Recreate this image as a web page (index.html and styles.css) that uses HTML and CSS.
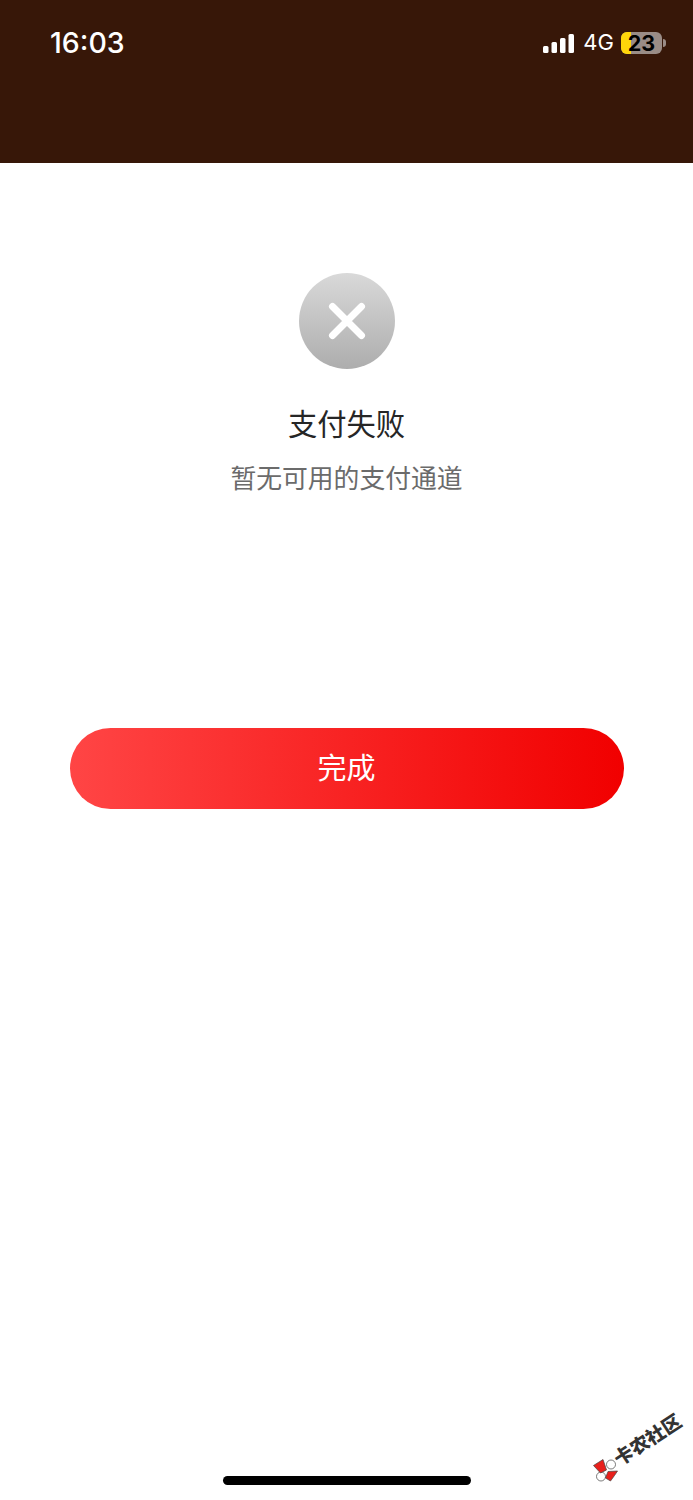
FILE: index.html
```html
<!DOCTYPE html>
<html lang="zh">
<head>
<meta charset="utf-8">
<title>支付失败</title>
<link rel="stylesheet" href="styles.css">
</head>
<body>
<div class="page">
  <header class="topbar">
    <span class="time">16:03</span>
    <div class="status">
      <svg class="signal" width="32" height="20" viewBox="0 0 32 20"><rect x="0" y="12" width="5.5" height="7" rx="1.5"/><rect x="8.5" y="8" width="5.5" height="11" rx="1.5"/><rect x="17" y="4" width="5.5" height="15" rx="1.5"/><rect x="25.5" y="0" width="5.5" height="19" rx="1.5"/></svg>
      <span class="net">4G</span>
      <div class="battery">
        <div class="battery-body"><div class="battery-fill"></div><span class="battery-num">23</span></div>
        <div class="battery-cap"></div>
      </div>
    </div>
  </header>
  <main class="content">
    <div class="fail-icon">
      <svg width="96" height="96" viewBox="0 0 96 96"><path d="M33.5 33.5L62.5 62.5M62.5 33.5L33.5 62.5" fill="none" stroke="#fff" stroke-width="7" stroke-linecap="round"/></svg>
    </div>
    <h1 class="title">支付失败</h1>
    <p class="subtitle">暂无可用的支付通道</p>
    <button class="done"><span class="done-label">完成</span></button>
  </main>
  <div class="home-bar"></div>
  <div class="watermark">
    <svg class="wm-logo" width="36" height="36" viewBox="0 0 36 36"><g stroke="#444" stroke-width=".7"><circle cx="23" cy="16.5" r="4.5" fill="#fff"/><circle cx="13" cy="28.5" r="4.5" fill="#fff"/><path d="M5.5 17.5L15 11.5L18.5 22L12.5 25Z" fill="#e8201c"/><path d="M20 23.5L29.5 23L26.5 27.5L22.5 33L17.5 30Z" fill="#e8201c"/></g></svg>
    <span class="wm-text">卡农社区</span>
  </div>
</div>
</body>
</html>
```

FILE: styles.css
```css
* { box-sizing: border-box; }
html, body { margin: 0; padding: 0; background: #fff; }
body { font-family: "Noto Sans CJK SC", "Liberation Sans", sans-serif; }
.page { position: relative; width: 693px; height: 1500px; overflow: hidden; background: #fff; }
.topbar {
  height: 163px; background: #371708; color: #fff;
  display: flex; justify-content: space-between; align-items: flex-start;
  padding: 24px 27px 0 50px;
}
.time { font-family: Inter, "Liberation Sans", sans-serif; font-size: 28.5px; font-weight: 500; line-height: 37px; }
.status { display: flex; align-items: center; height: 37px; }
.signal { fill: #fff; margin-top: 2px; }
.net { font-family: Inter, "Liberation Sans", sans-serif; font-size: 22px; line-height: 37px; margin-left: 8px; }
.battery { display: flex; align-items: center; margin-left: 7px; }
.battery-body { position: relative; width: 41px; height: 22px; border-radius: 6px; background: #9a8c86; display: flex; align-items: center; justify-content: center; }
.battery-fill { position: absolute; left: 0; top: 0; bottom: 0; width: 10px; border-radius: 6px 0 0 6px; background: #ffd60a; }
.battery-num { position: relative; font-family: Inter, "Liberation Sans", sans-serif; font-size: 21.5px; font-weight: 700; color: #000; line-height: 22px; }
.battery-cap { width: 3px; height: 8px; margin-left: 1px; border-radius: 0 3px 3px 0; background: #9a8c86; }
.content { display: flex; flex-direction: column; align-items: center; padding-top: 110px; }
.fail-icon { width: 96px; height: 96px; border-radius: 50%; background: linear-gradient(180deg, #d9d9d9, #adadad); }
.fail-icon svg { display: block; }
.title { margin: 32px 0 0; font-size: 29.3px; font-weight: 400; line-height: 42px; color: #262626; }
.subtitle { margin: 15px 0 0; font-size: 25.8px; line-height: 38px; color: #6b6b6b; }
.done {
  margin: 232px 0 0 1px; width: 554px; height: 81px; border: 0; border-radius: 41px;
  background: linear-gradient(90deg, #ff4545, #f10000); color: #fff;
  font-family: inherit; font-size: 29px; padding: 0 1px 0 0;
}
.done-label { display: block; margin-top: -6px; }
.home-bar { position: absolute; left: 223px; top: 1476px; width: 248px; height: 9px; border-radius: 5px; background: #000; }
.watermark { position: absolute; left: 588px; top: 1448px; width: 36px; height: 36px; }
.wm-logo { display: block; }
.wm-text { position: absolute; left: 21px; top: -24px; width: 76px; height: 30px; font-size: 19px; font-weight: 900; color: #333; line-height: 30px; white-space: nowrap; transform: rotate(-33deg); }
```
